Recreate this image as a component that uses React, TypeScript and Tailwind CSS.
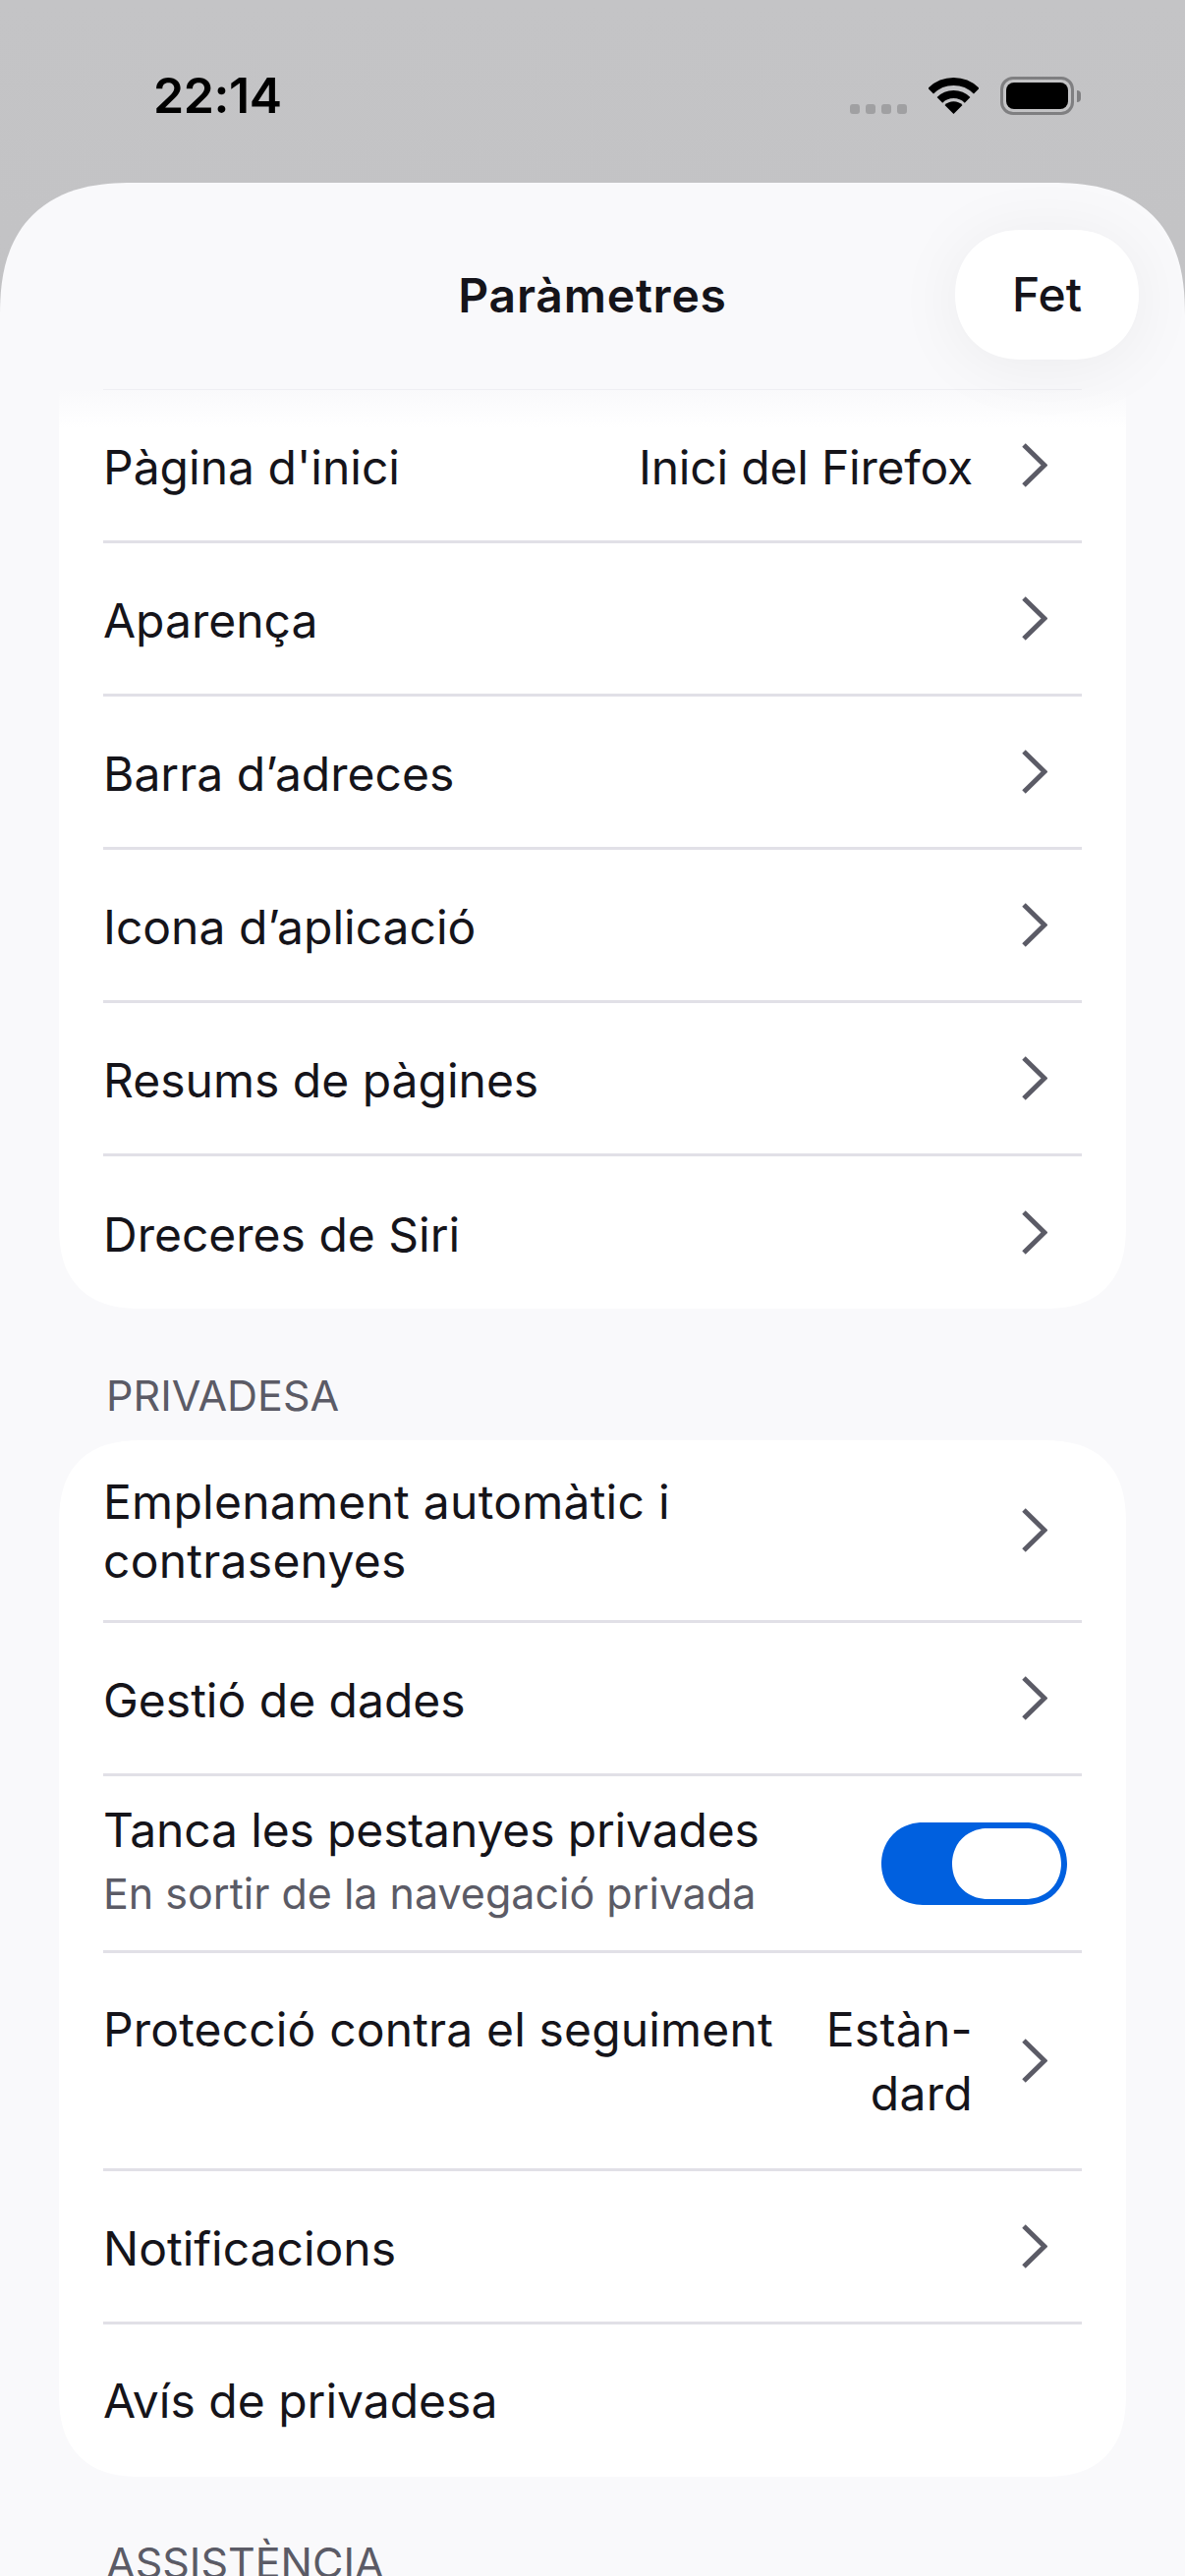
const TEXT = "text-[#15141a]";

function Chevron() {
  return (
    <svg width="27" height="47" viewBox="0 0 27 47" className="block shrink-0" fill="none">
      <path d="M3 3 L24 23.5 L3 44" stroke="#5b5b66" strokeWidth="5" />
    </svg>
  );
}

function Sep() {
  return <div className="ml-[45px] mr-[45px] h-[3px] bg-[#e1e0e7]" />;
}

function Row({
  label,
  value,
  height = "h-[153px]",
}: {
  label: string;
  value?: string;
  height?: string;
}) {
  return (
    <div className={`flex items-center pl-[45px] pr-[80px] ${height}`}>
      <span className="flex-1 pt-[5px]">{label}</span>
      {value && <span className="mr-[49px] pt-[5px] tracking-[-0.2px]">{value}</span>}
      <Chevron />
    </div>
  );
}

function Wifi() {
  return (
    <svg width="51" height="38" viewBox="0 0 51 38" fill="none" className="block">
      <path d="M2.2 14.7 A33 33 0 0 1 48.8 14.7" stroke="#000" strokeWidth="8" />
      <path d="M11.4 23.9 A20 20 0 0 1 39.6 23.9" stroke="#000" strokeWidth="8" />
      <path d="M25.5 38 L16.5 29 A12.7 12.7 0 0 1 34.5 29 Z" fill="#000" />
    </svg>
  );
}

export default function App() {
  return (
    <div
      className={`flex h-[2622px] w-[1206px] flex-col overflow-hidden bg-gradient-to-b from-[#c4c4c6] to-[#b9b9bb] ${TEXT}`}
      style={{ fontFamily: "Inter, 'Noto Sans', sans-serif" }}
    >
      <div className="flex h-[186px] shrink-0 justify-between pl-[156px] pr-[106px]">
        <span className="mt-[66px] text-[50px] leading-[62px] font-semibold tracking-[-0.4px] text-black">22:14</span>
        <div className="mt-[78px] flex h-[39px] items-start">
          <div className="mt-[28px] flex gap-[6px]">
            <i className="h-[10px] w-[10px] rounded-[3px] bg-[#a0a0a2]" />
            <i className="h-[10px] w-[10px] rounded-[3px] bg-[#a0a0a2]" />
            <i className="h-[10px] w-[10px] rounded-[3px] bg-[#a0a0a2]" />
            <i className="h-[10px] w-[10px] rounded-[3px] bg-[#a0a0a2]" />
          </div>
          <div className="ml-[22px]"><Wifi /></div>
          <div className="ml-[22px] flex items-center">
            <div className="h-[39px] w-[75px] rounded-[13px] border-[3px] border-[#7f7f81] p-[3px]">
              <div className="h-full w-full rounded-[8px] bg-black" />
            </div>
            <div className="ml-[3px] h-[12px] w-[4px] rounded-r-full bg-[#7f7f81]" />
          </div>
        </div>
      </div>

      <div className="relative flex min-h-0 flex-1 flex-col overflow-hidden rounded-t-[135px] bg-[#f9f9fb] [corner-shape:superellipse(1.3)]">
        <div className="relative z-20 flex h-[210px] shrink-0 items-center justify-center pt-[20px]">
          <span className="text-[48px] font-semibold tracking-[0.8px]">Paràmetres</span>
          <button className="absolute left-[972px] top-[48px] h-[132px] w-[187px] rounded-[66px] bg-white text-[48px] font-medium shadow-[0_6px_70px_rgba(0,0,0,0.06)] [corner-shape:superellipse(1.08)]">
            Fet
          </button>
        </div>

        <div className="relative flex flex-col px-[60px] text-[48px] font-normal">
          <div className="absolute left-[60px] right-[60px] top-0 z-10 h-[40px] bg-gradient-to-b from-[#f9f9fb] to-transparent" />
          <div className="absolute left-[105px] right-[105px] top-0 z-10 h-px bg-[#efeff3]" />
          <div className="rounded-b-[85px] bg-white [corner-shape:superellipse(1.3)]">
            <Row label="Pàgina d'inici" value="Inici del Firefox" height="h-[154px]" />
            <Sep />
            <Row label="Aparença" />
            <Sep />
            <Row label="Barra d’adreces" />
            <Sep />
            <Row label="Icona d’aplicació" />
            <Sep />
            <Row label="Resums de pàgines" />
            <Sep />
            <Row label="Dreceres de Siri" height="h-[155px]" />
          </div>

          <div className="mt-[60px] mb-[18px] pl-[48px] text-[43px] leading-[56px] text-[#5b5b66]">PRIVADESA</div>

          <div className="rounded-[85px] bg-white [corner-shape:superellipse(1.3)]">
            <div className="flex h-[183px] items-center pl-[45px] pr-[80px]">
              <span className="flex-1 pt-[3px] leading-[60px] tracking-[0.25px]">
                Emplenament automàtic i<br />contrasenyes
              </span>
              <Chevron />
            </div>
            <Sep />
            <Row label="Gestió de dades" />
            <Sep />
            <div className="flex h-[177px] items-center pl-[45px] pr-[60px]">
              <div className="flex-1 pb-[4px]">
                <div className="leading-[65px] tracking-[-0.15px]">Tanca les pestanyes privades</div>
                <div className="text-[43px] leading-[64px] text-[#5b5b66]">En sortir de la navegació privada</div>
              </div>
              <div className="flex h-[84px] w-[189px] justify-end rounded-[42px] bg-[#0060df] p-[6px] [corner-shape:superellipse(1.05)]">
                <div className="h-[72px] w-[111px] rounded-[36px] bg-white [corner-shape:superellipse(1.05)]" />
              </div>
            </div>
            <Sep />
            <div className="flex h-[219px] items-center pl-[45px] pr-[80px]">
              <span className="flex-1 self-start pt-[47px] leading-[62px] tracking-[0.15px]">Protecció contra el seguiment</span>
              <span className="mr-[49px] text-right leading-[65px] tracking-[0.3px]">
                Estàn-<br />dard
              </span>
              <Chevron />
            </div>
            <Sep />
            <Row label="Notificacions" />
            <Sep />
            <div className="flex h-[155px] items-center pl-[45px]">Avís de privadesa</div>
          </div>

          <div className="mt-[59px] pl-[48px] text-[43px] leading-[56px] text-[#5b5b66]">ASSISTÈNCIA</div>
        </div>
      </div>
    </div>
  );
}
